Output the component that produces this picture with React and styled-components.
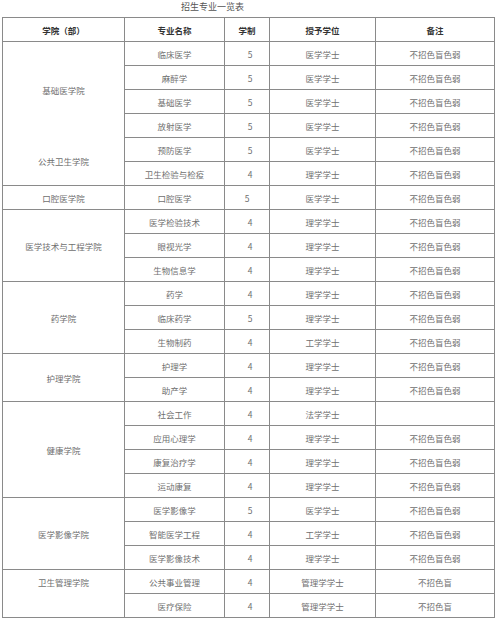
import styled, { createGlobalStyle } from "styled-components";

const GlobalStyle = createGlobalStyle`
  html, body {
    margin: 0;
    padding: 0;
    background: #fff;
  }
  body {
    font-family: "Noto Sans CJK SC", "Noto Sans", sans-serif;
  }
`;

const Page = styled.div`
  width: 500px;
  height: 627px;
  overflow: hidden;
  padding-left: 2px;
  box-sizing: border-box;
`;

const Caption = styled.div`
  height: 17px;
  line-height: 14px;
  padding-left: 179px;
  font-size: 9px;
  color: #555;
`;

const Table = styled.table`
  width: 493px;
  border-collapse: collapse;
  table-layout: fixed;
  font-size: 8.5px;
  color: #6f6f6f;
`;

const Row = styled.tr`
  height: 24px;
`;

const Head = styled.th`
  border: 1px solid #8a8a8a;
  padding: 0;
  font-weight: bold;
  color: #333;
  text-align: center;
  vertical-align: middle;
`;

const Cell = styled.td`
  border: 1px solid #8a8a8a;
  padding: 0 0 0 ${(p) => (p.$shift ? "6px" : "0")};
  text-align: center;
  vertical-align: ${(p) => (p.$top ? "top" : "middle")};
  line-height: ${(p) => (p.$top ? "24px" : "normal")};
  ${(p) => p.$noBottom && "border-bottom: hidden;"}
`;

const groups = [
  {
    name: "基础医学院",
    span: 4,
    noBottom: true,
    rows: [
      ["临床医学", "5", "医学学士", "不招色盲色弱"],
      ["麻醉学", "5", "医学学士", "不招色盲色弱"],
      ["基础医学", "5", "医学学士", "不招色盲色弱"],
      ["放射医学", "5", "医学学士", "不招色盲色弱"],
    ],
  },
  {
    name: "公共卫生学院",
    span: 2,
    rows: [
      ["预防医学", "5", "医学学士", "不招色盲色弱"],
      ["卫生检验与检疫", "4", "理学学士", "不招色盲色弱"],
    ],
  },
  {
    name: "口腔医学院",
    span: 1,
    rows: [["口腔医学", "5", "医学学士", "不招色盲色弱", true]],
  },
  {
    name: "医学技术与工程学院",
    span: 3,
    rows: [
      ["医学检验技术", "4", "理学学士", "不招色盲色弱"],
      ["眼视光学", "4", "理学学士", "不招色盲色弱"],
      ["生物信息学", "4", "理学学士", "不招色盲色弱"],
    ],
  },
  {
    name: "药学院",
    span: 3,
    rows: [
      ["药学", "4", "理学学士", "不招色盲色弱"],
      ["临床药学", "5", "理学学士", "不招色盲色弱"],
      ["生物制药", "4", "工学学士", "不招色盲色弱"],
    ],
  },
  {
    name: "护理学院",
    span: 2,
    rows: [
      ["护理学", "4", "理学学士", "不招色盲色弱"],
      ["助产学", "4", "理学学士", "不招色盲色弱"],
    ],
  },
  {
    name: "健康学院",
    span: 4,
    rows: [
      ["社会工作", "4", "法学学士", ""],
      ["应用心理学", "4", "理学学士", "不招色盲色弱"],
      ["康复治疗学", "4", "理学学士", "不招色盲色弱"],
      ["运动康复", "4", "理学学士", "不招色盲色弱"],
    ],
  },
  {
    name: "医学影像学院",
    span: 3,
    rows: [
      ["医学影像学", "5", "医学学士", "不招色盲色弱"],
      ["智能医学工程", "4", "工学学士", "不招色盲色弱"],
      ["医学影像技术", "4", "理学学士", "不招色盲色弱"],
    ],
  },
  {
    name: "卫生管理学院",
    span: 2,
    top: true,
    rows: [
      ["公共事业管理", "4", "管理学学士", "不招色盲"],
      ["医疗保险", "4", "管理学学士", "不招色盲"],
    ],
  },
];

export default function App() {
  return (
    <>
      <GlobalStyle />
      <Page>
        <Caption>招生专业一览表</Caption>
        <Table>
          <colgroup>
            <col style={{ width: 122 }} />
            <col style={{ width: 100 }} />
            <col style={{ width: 45 }} />
            <col style={{ width: 106 }} />
            <col />
          </colgroup>
          <thead>
            <Row>
              <Head>学院（部）</Head>
              <Head>专业名称</Head>
              <Head>学制</Head>
              <Head>授予学位</Head>
              <Head>备注</Head>
            </Row>
          </thead>
          <tbody>
            {groups.map((g) =>
              g.rows.map((r, i) => (
                <Row key={g.name + r[0]}>
                  {i === 0 && (
                    <Cell rowSpan={g.span} $top={g.top} $noBottom={g.noBottom}>
                      {g.name}
                    </Cell>
                  )}
                  <Cell>{r[0]}</Cell>
                  <Cell $shift={!r[4]}>{r[1]}</Cell>
                  <Cell>{r[2]}</Cell>
                  <Cell>{r[3]}</Cell>
                </Row>
              ))
            )}
          </tbody>
        </Table>
      </Page>
    </>
  );
}
